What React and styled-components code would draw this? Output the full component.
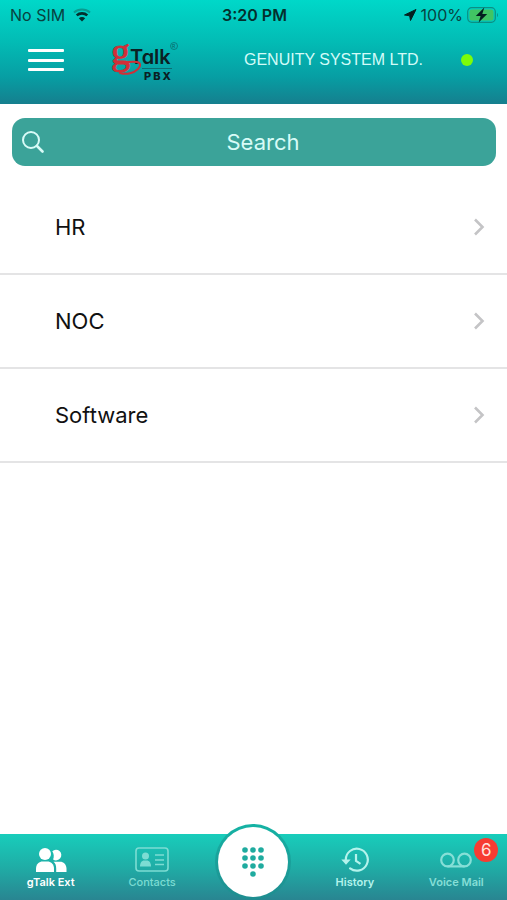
import styled, { createGlobalStyle } from "styled-components";

const GlobalStyle = createGlobalStyle`
  * {
    box-sizing: border-box;
  }

  body {
    margin: 0;
    background: #fff;
    font-family: Inter, "Liberation Sans", sans-serif;
  }

  button {
    border: 0;
    padding: 0;
    background: none;
    font: inherit;
    color: inherit;
    cursor: pointer;
  }
`;

const Screen = styled.div`
  min-height: 100vh;
  display: flex;
  flex-direction: column;
`;

const Header = styled.header`
  padding-bottom: 14px;
  background: linear-gradient(#00d8c9 0%, #02bcb5 40%, #079ea3 74%, #157f8e 100%);
`;

const StatusBar = styled.div`
  height: 30px;
  padding: 0 8px 0 10px;
  display: grid;
  grid-template-columns: 1fr auto 1fr;
  align-items: center;
  font-size: 16px;
  line-height: 20px;
  color: #08433f;
`;

const StatusGroup = styled.div`
  display: flex;
  align-items: center;
  justify-content: ${(props) => (props.$end ? "flex-end" : "flex-start")};
  gap: ${(props) => (props.$end ? "4px" : "8px")};
`;

const Time = styled.div`
  font-weight: 600;
  color: #04302d;
`;

const NavBar = styled.div`
  height: 60px;
  display: grid;
  grid-template-columns: 92px 104px 1fr 80px;
  align-items: center;
  justify-items: center;
`;

const MenuButton = styled.button`
  width: 36px;
  height: 22px;
  display: flex;
  flex-direction: column;
  justify-content: space-between;
`;

const MenuLine = styled.span`
  width: 100%;
  height: 3px;
  border-radius: 1px;
  background: #fff;
`;

const LogoTalk = styled.text`
  font-family: Inter, sans-serif;
  font-size: 20px;
  font-weight: 600;
  font-feature-settings: "cv11";
  fill: #0b2023;
`;

const LogoG = styled.text`
  font-family: "Liberation Serif", serif;
  font-size: 38px;
  fill: #d02f38;
  stroke: #d02f38;
  stroke-width: 1px;
`;

const LogoPbx = styled.text`
  font-family: Inter, sans-serif;
  font-size: 11px;
  font-weight: 800;
  letter-spacing: 2px;
  fill: #0b2023;
`;

const LogoMark = styled.text`
  font-family: Inter, sans-serif;
  font-size: 5px;
  fill: #0b5f64;
`;

const Company = styled.div`
  justify-self: end;
  padding-right: 4px;
  font-family: "Liberation Sans", Arial, sans-serif;
  font-size: 16px;
  line-height: 20px;
  white-space: nowrap;
  color: #d3fbf8;
`;

const OnlineDot = styled.span`
  width: 12px;
  height: 12px;
  border-radius: 50%;
  background: #7cfc0a;
`;

const Main = styled.main`
  flex: 1;
`;

const SearchBox = styled.label`
  height: 48px;
  margin: 14px 11px 15px 12px;
  padding: 0 14px 0 10px;
  display: flex;
  align-items: center;
  border-radius: 13px;
  background: #3ba399;
  color: #d8fbf7;
`;

const SearchInput = styled.input`
  flex: 1;
  min-width: 0;
  height: 100%;
  padding: 0;
  border: 0;
  outline: 0;
  background: none;
  font-family: inherit;
  font-size: 22px;
  text-align: center;
  color: inherit;

  &::placeholder {
    color: inherit;
    opacity: 1;
  }
`;

const List = styled.ul`
  margin: 0;
  padding: 0;
  list-style: none;
`;

const Row = styled.li`
  height: 94px;
  border-bottom: 2px solid #e4e4e5;
`;

const RowButton = styled.button`
  width: 100%;
  height: 100%;
  padding: 0 22px 0 55px;
  display: flex;
  align-items: center;
  justify-content: space-between;
  font-size: 22px;
  line-height: 28px;
  color: #111;
`;

const TabBar = styled.nav`
  height: 66px;
  display: grid;
  grid-template-columns: repeat(5, 1fr);
  background: linear-gradient(#18cdbb 0%, #1fada6 50%, #298591 100%);
`;

const Tab = styled.button`
  padding-top: 11px;
  display: flex;
  flex-direction: column;
  align-items: center;
  font-size: 11px;
  font-weight: ${(props) => (props.$strong ? 600 : 500)};
  line-height: 14px;
  color: ${(props) => props.$color};
`;

const TabIcon = styled.span`
  position: relative;
  height: 30px;
  display: flex;
  align-items: center;
`;

const Badge = styled.span`
  position: absolute;
  left: 34px;
  top: -7px;
  width: 24px;
  height: 24px;
  border-radius: 50%;
  background: #f73c32;
  font-size: 17px;
  font-weight: 400;
  line-height: 24px;
  text-align: center;
  color: #ffe3df;
`;

const DialButton = styled.button`
  justify-self: center;
  width: 76px;
  height: 76px;
  margin-top: -10px;
  display: flex;
  align-items: center;
  justify-content: center;
  border-radius: 50%;
  border: 3px solid transparent;
  background:
    linear-gradient(#fff, #fff) padding-box,
    linear-gradient(#15b3a4, #1f8d90) border-box;
`;

const Logo = () => (
  <svg width="72" height="60" viewBox="0 0 72 60" role="img" aria-label="gTalk PBX">
    <LogoTalk x="22" y="34">
      Talk
    </LogoTalk>
    <LogoG x="3" y="34">
      g
    </LogoG>
    <path
      d="M14 33c5-1 10-2 15-1 4 1 4 4 1 7-4 4-11 6-18 4"
      fill="none"
      stroke="#d02f38"
      strokeWidth="2"
      strokeLinecap="round"
    />
    <path d="M34 38.500h30" stroke="#0b6f74" strokeWidth="1" />
    <LogoPbx x="36" y="50">
      PBX
    </LogoPbx>
    <circle cx="66" cy="16" r="3.500" fill="none" stroke="#0b6f74" strokeWidth="0.800" />
    <LogoMark x="64" y="18">
      R
    </LogoMark>
  </svg>
);

const WifiIcon = () => (
  <svg width="18" height="14" viewBox="0 0 18 14" fill="none">
    <path d="M1 4.500c4.500-4 11.500-4 16 0" stroke="#099b90" strokeWidth="2" />
    <path d="M3.700 7.400c3-2.700 7.600-2.700 10.600 0" stroke="#04302d" strokeWidth="2.600" />
    <path d="M5.800 10.200c1.900-1.700 4.500-1.700 6.400 0L9 13.500z" fill="#04302d" />
  </svg>
);

const LocationIcon = () => (
  <svg width="14" height="14" viewBox="0 0 14 14">
    <path d="M13 1.500 7.500 12.500 6.700 7.800 1.500 7z" fill="#04201f" stroke="#04201f" strokeLinejoin="round" />
  </svg>
);

const BatteryIcon = () => (
  <svg width="32" height="18" viewBox="0 0 32 18">
    <rect x="0.700" y="1.700" width="27.600" height="14.600" rx="4" fill="none" stroke="#0c8f83" strokeWidth="1.200" />
    <rect x="2.500" y="3.500" width="24" height="11" rx="2.500" fill="#41c463" />
    <path d="M30 7v4c1.300-.5 1.300-3.500 0-4z" fill="#0c8f83" />
    <path d="M17.300 1.500 8.800 10h4.800l-2 6.500L20.200 8h-4.900z" fill="#04201f" />
  </svg>
);

const SearchIcon = () => (
  <svg width="22" height="22" viewBox="0 0 22 22" fill="none" stroke="currentColor" strokeWidth="2">
    <circle cx="9" cy="9" r="8" />
    <path d="m15 15 5.500 5.500" strokeWidth="2.600" strokeLinecap="round" />
  </svg>
);

const Chevron = () => (
  <svg width="12" height="18" viewBox="0 0 12 18" fill="none" stroke="#c4c4c6" strokeWidth="2.600">
    <path d="m2 1.500 7.500 7.500L2 16.500" />
  </svg>
);

const PeopleIcon = () => (
  <svg width="32" height="26" viewBox="0 0 32 26" fill="currentColor">
    <circle cx="10" cy="7" r="6" />
    <path d="M1 25v-3.500C1 17 4.500 14.500 7.500 14.500h5c3 0 6.500 2.500 6.500 7V25z" />
    <path d="M17.300 4.300a5.300 5.300 0 1 1 .8 8.200c1.100-2.500.9-5.700-.8-8.200z" />
    <path d="M18.500 14.700h6.800c3 0 6.200 2.500 6.200 6.800V25H21.200v-3.500c0-3-.7-5.300-2.700-6.800z" />
  </svg>
);

const CardIcon = () => (
  <svg width="34" height="26" viewBox="0 0 34 26" fill="none" stroke="currentColor">
    <rect x="1" y="1" width="32" height="23" rx="3" strokeWidth="1.600" />
    <circle cx="10.500" cy="9" r="3.500" fill="currentColor" stroke="none" />
    <path d="M5 19.500c0-4 2-6 4-6h3c2 0 4 2 4 6z" fill="currentColor" stroke="none" />
    <path d="M20 8h9M20 13h9M20 17.500h9" strokeWidth="1.600" />
  </svg>
);

const HistoryIcon = () => (
  <svg width="28" height="26" viewBox="0 0 28 26" fill="none" stroke="currentColor" strokeWidth="2.200">
    <path d="M4.800 14V12.500a11 11 0 1 1 4.300 8.900" strokeLinecap="round" />
    <path d="M.3 12.500h9.400L5 17.800z" fill="currentColor" stroke="none" />
    <path d="M15 7v6.800l4.500 3" />
  </svg>
);

const VoicemailIcon = () => (
  <svg width="32" height="16" viewBox="0 0 32 16" fill="none" stroke="currentColor" strokeWidth="2.200">
    <circle cx="7.500" cy="8" r="6.300" />
    <circle cx="24.500" cy="8" r="6.300" />
    <path d="M7.500 14.400h17" />
  </svg>
);

const dots = [
  [4, 4], [12, 4], [20, 4],
  [4, 12], [12, 12], [20, 12],
  [4, 20], [12, 20], [20, 20],
  [12, 28],
];

const DialIcon = () => (
  <svg width="24" height="32" viewBox="0 0 24 32" fill="#1fab9f">
    {dots.map(([x, y]) => (
      <circle key={`${x}-${y}`} cx={x} cy={y} r="2.800" />
    ))}
  </svg>
);

const departments = ["HR", "NOC", "Software"];

export default function App() {
  return (
    <>
      <GlobalStyle />
      <Screen>
        <Header>
          <StatusBar>
            <StatusGroup>
              No SIM
              <WifiIcon />
            </StatusGroup>
            <Time>3:20 PM</Time>
            <StatusGroup $end>
              <LocationIcon />
              100%
              <BatteryIcon />
            </StatusGroup>
          </StatusBar>
          <NavBar>
            <MenuButton aria-label="Menu">
              <MenuLine />
              <MenuLine />
              <MenuLine />
            </MenuButton>
            <Logo />
            <Company>GENUITY SYSTEM LTD.</Company>
            <OnlineDot />
          </NavBar>
        </Header>

        <Main>
          <SearchBox>
            <SearchIcon />
            <SearchInput type="text" placeholder="Search" aria-label="Search" />
          </SearchBox>
          <List>
            {departments.map((name) => (
              <Row key={name}>
                <RowButton>
                  {name}
                  <Chevron />
                </RowButton>
              </Row>
            ))}
          </List>
        </Main>

        <TabBar>
          <Tab $strong $color="#fff">
            <TabIcon>
              <PeopleIcon />
            </TabIcon>
            gTalk Ext
          </Tab>
          <Tab $color="#7cdcd3">
            <TabIcon>
              <CardIcon />
            </TabIcon>
            Contacts
          </Tab>
          <DialButton aria-label="Dial pad">
            <DialIcon />
          </DialButton>
          <Tab $strong $color="#b4f3ec">
            <TabIcon>
              <HistoryIcon />
            </TabIcon>
            History
          </Tab>
          <Tab $strong $color="#86dfd7">
            <TabIcon>
              <VoicemailIcon />
              <Badge>6</Badge>
            </TabIcon>
            Voice Mail
          </Tab>
        </TabBar>
      </Screen>
    </>
  );
}
